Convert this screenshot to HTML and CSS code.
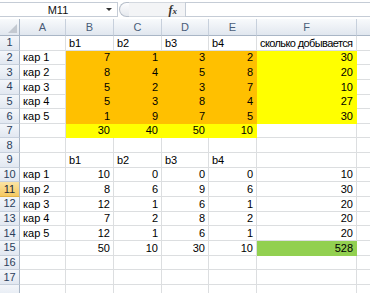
FILE: index.html
```html
<!DOCTYPE html>
<html lang="ru">
<head>
<meta charset="utf-8">
<title>Excel</title>
<link rel="stylesheet" href="styles.css">
</head>
<body>
<div class="app">
  <div class="fbar">
    <div class="namebox"><span class="name">M11</span><span class="dd"></span></div>
    <div class="split"></div>
    <div class="fxzone"><span class="fx">f<small>x</small></span></div>
    <div class="formula"></div>
  </div>
  <table class="sheet">
    <colgroup>
      <col class="w-rh"><col class="w-a"><col class="w-b"><col class="w-c"><col class="w-d"><col class="w-e"><col class="w-f"><col class="w-g">
    </colgroup>
    <tr class="hdr"><th class="corner"><span class="tri"></span></th><th>A</th><th>B</th><th>C</th><th>D</th><th>E</th><th>F</th><th></th></tr>
    <tr><th>1</th><td></td><td>b1</td><td>b2</td><td>b3</td><td>b4</td><td class="tight">сколько добывается</td><td></td></tr>
    <tr><th>2</th><td>кар 1</td><td class="n o">7</td><td class="n o">1</td><td class="n o">3</td><td class="n o">2</td><td class="n y">30</td><td></td></tr>
    <tr><th>3</th><td>кар 2</td><td class="n o">8</td><td class="n o">4</td><td class="n o">5</td><td class="n o">8</td><td class="n y">20</td><td></td></tr>
    <tr><th>4</th><td>кар 3</td><td class="n o">5</td><td class="n o">2</td><td class="n o">3</td><td class="n o">7</td><td class="n y">10</td><td></td></tr>
    <tr><th>5</th><td>кар 4</td><td class="n o">5</td><td class="n o">3</td><td class="n o">8</td><td class="n o">4</td><td class="n y">27</td><td></td></tr>
    <tr><th>6</th><td>кар 5</td><td class="n o">1</td><td class="n o">9</td><td class="n o">7</td><td class="n o">5</td><td class="n y">30</td><td></td></tr>
    <tr><th>7</th><td></td><td class="n y">30</td><td class="n y">40</td><td class="n y">50</td><td class="n y">10</td><td></td><td></td></tr>
    <tr><th>8</th><td></td><td></td><td></td><td></td><td></td><td></td><td></td></tr>
    <tr><th>9</th><td></td><td>b1</td><td>b2</td><td>b3</td><td>b4</td><td></td><td></td></tr>
    <tr><th>10</th><td>кар 1</td><td class="n">10</td><td class="n">0</td><td class="n">0</td><td class="n">0</td><td class="n">10</td><td></td></tr>
    <tr><th class="sel">11</th><td>кар 2</td><td class="n">8</td><td class="n">6</td><td class="n">9</td><td class="n">6</td><td class="n">30</td><td></td></tr>
    <tr><th>12</th><td>кар 3</td><td class="n">12</td><td class="n">1</td><td class="n">6</td><td class="n">1</td><td class="n">20</td><td></td></tr>
    <tr><th>13</th><td>кар 4</td><td class="n">7</td><td class="n">2</td><td class="n">8</td><td class="n">2</td><td class="n">20</td><td></td></tr>
    <tr><th>14</th><td>кар 5</td><td class="n">12</td><td class="n">1</td><td class="n">6</td><td class="n">1</td><td class="n">20</td><td></td></tr>
    <tr><th>15</th><td></td><td class="n">50</td><td class="n">10</td><td class="n">30</td><td class="n">10</td><td class="n g">528</td><td></td></tr>
    <tr><th>16</th><td></td><td></td><td></td><td></td><td></td><td></td><td></td></tr>
    <tr><th>17</th><td></td><td></td><td></td><td></td><td></td><td></td><td></td></tr>
    <tr class="last"><th></th><td></td><td></td><td></td><td></td><td></td><td></td><td></td></tr>
  </table>
</div>
</body>
</html>
```

FILE: styles.css
```css
* { box-sizing: border-box; }
html, body { margin: 0; padding: 0; background: #fff; }
body { font-family: "Liberation Sans", Arial, sans-serif; color: #000; }

.app { width: 370px; height: 293px; overflow: hidden; background: #fff; }

/* formula bar */
.fbar { display: flex; height: 19px; padding-top: 2px; }
.namebox {
  width: 118px; height: 15px; display: flex; align-items: center;
  border-top: 1px solid #c5ccd6; border-bottom: 1px solid #c5ccd6; border-right: 1px solid #c5ccd6;
  background: #fff;
}
.name { flex: 1; text-align: center; font-size: 11px; padding-left: 10px; color: #111; }
.dd {
  width: 0; height: 0; margin-right: 5px;
  border-left: 3px solid transparent; border-right: 3px solid transparent; border-top: 3px solid #333;
}
.split {
  width: 10px; height: 15px; margin-left: 1px;
  border: 1px solid #b7bfca; border-right: none; border-radius: 8px 0 0 8px;
  background: linear-gradient(#fdfdfe, #e6e9ee);
}
.fxzone {
  width: 56px; height: 15px; display: flex; align-items: center; justify-content: flex-end;
  padding-right: 8px; background: #f3f4f6;
  border-top: 1px solid #d3d8df; border-bottom: 1px solid #d3d8df;
}
.fx { font-family: "Liberation Serif", serif; font-style: italic; font-weight: bold; font-size: 12px; color: #333; line-height: 1; }
.fx small { font-size: 9px; }
.formula {
  flex: 1; height: 15px; background: #fff;
  border: 1px solid #c5ccd6; border-right: none;
}

/* sheet */
.sheet { border-collapse: separate; border-spacing: 0; table-layout: fixed; width: 377px; }
.w-rh { width: 20px; } .w-a { width: 46px; } .w-b { width: 48px; } .w-c { width: 48px; }
.w-d { width: 47px; } .w-e { width: 48px; } .w-f { width: 100px; } .w-g { width: 20px; }

.sheet tr { height: 14.65px; }
.sheet tr.hdr { height: 17px; }

.sheet th {
  font-weight: normal; font-size: 11px; color: #2b3f5c; padding: 0; text-align: center;
  background: linear-gradient(#f3f6fa, #e2e8f1);
  border-right: 1px solid #c7d0dc; border-bottom: 1px solid #c7d0dc;
  line-height: 13px; vertical-align: middle;
}
.sheet tr.hdr th { color: #4a5d78; border-bottom: 1px solid #a9b6c6; background: linear-gradient(#f8fafc, #e1e7ef); }
.sheet tr th:first-child { border-right: 1px solid #a9b6c6; }
.sheet th.sel { background: linear-gradient(#fbe4a4, #f5c962); color: #1e2a3a; border-bottom: 1px solid #e3b245; }
.corner { position: relative; }
.tri {
  position: absolute; right: 2px; bottom: 2px; width: 0; height: 0;
  border-left: 9px solid transparent; border-bottom: 9px solid #c3c9d1;
}

.sheet td {
  font-size: 11px; padding: 0 3px 1px 3px; white-space: nowrap; overflow: visible;
  border-right: 1px solid #dcdee0; border-bottom: 1px solid #dcdee0;
  vertical-align: bottom; line-height: 12px;
}
.sheet td.n { text-align: right; }
.sheet td.tight { letter-spacing: -0.6px; }
.sheet td.o { background: #ffc000; border-color: #ffc000; }
.sheet td.y { background: #ffff00; border-color: #ffff00; }
.sheet td.g { background: #92d050; border-color: #92d050; }
```
